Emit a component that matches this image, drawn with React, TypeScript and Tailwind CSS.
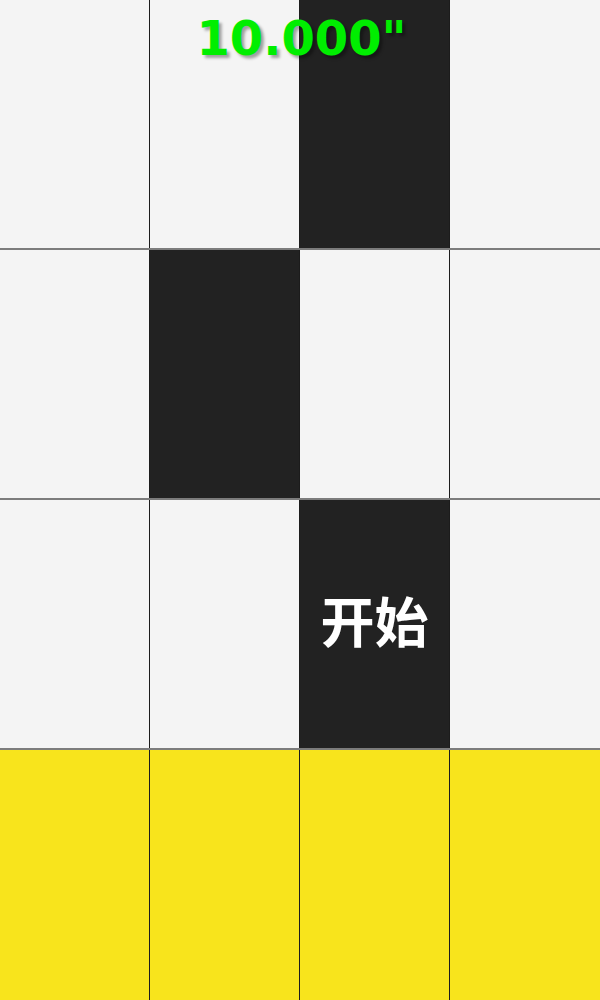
const ROWS: ('w' | 'b' | 'y')[][] = [
  ['w', 'w', 'b', 'w'],
  ['w', 'b', 'w', 'w'],
  ['w', 'w', 'b', 'w'],
  ['y', 'y', 'y', 'y'],
];

const tileColor = {
  w: 'bg-[#f4f4f4]',
  b: 'bg-[#222222]',
  y: 'bg-[#f8e41c]',
};

export default function App() {
  return (
    <div className="relative w-[600px] h-[1000px] overflow-hidden bg-[#f4f4f4]">
      <div className="flex flex-col">
        {ROWS.map((row, r) => (
          <div
            key={r}
            className={`flex h-[250px] box-border ${r < 3 ? 'border-b-2 border-b-[#7c7c7c]' : ''}`}
          >
            {row.map((c, i) => (
              <div
                key={i}
                className={`w-[150px] h-full box-border flex items-center justify-center ${i < 3 ? 'border-r border-r-[#1c1c1c]' : ''} ${tileColor[c]}`}
              >
                {r === 2 && i === 2 && (
                  <span className="text-white text-[54px] leading-none font-semibold font-['Noto_Sans_CJK_SC',sans-serif] -mt-[8px]">
                    开始
                  </span>
                )}
              </div>
            ))}
          </div>
        ))}
      </div>

      {/* timer */}
      <div className="absolute top-[2px] left-0 right-0 flex justify-center pl-[3px]">
        <span className="text-[48px] font-bold text-[#00ee00] font-['DejaVu_Sans',sans-serif] [text-shadow:3px_3px_3px_rgba(0,0,0,0.35)]">
          10.000"
        </span>
      </div>
    </div>
  );
}
